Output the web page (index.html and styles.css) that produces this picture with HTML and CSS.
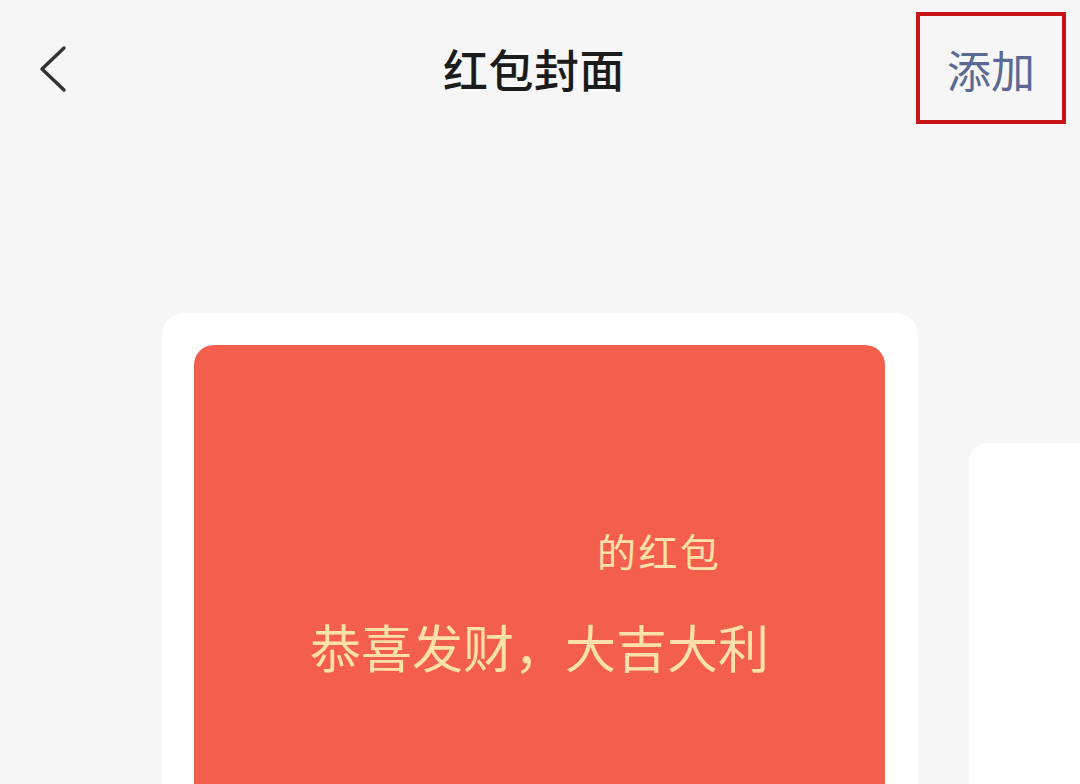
FILE: index.html
```html
<!DOCTYPE html>
<html lang="zh">
<head>
<meta charset="utf-8">
<link rel="stylesheet" href="styles.css">
</head>
<body>
<div class="page">
  <header class="topbar">
    <div class="back">
      <svg width="30" height="48" viewBox="0 0 30 48"><polyline points="26,3 4,24 26,45" fill="none" stroke="#333" stroke-width="3.4" stroke-linecap="round" stroke-linejoin="round"/></svg>
    </div>
    <h1 class="title">红包封面</h1>
    <div class="add">添加</div>
  </header>
  <main class="carousel">
    <div class="card">
      <div class="envelope">
        <div class="from">的红包</div>
        <div class="wish">恭喜发财，大吉大利</div>
      </div>
    </div>
    <div class="card card-next"></div>
  </main>
</div>
</body>
</html>
```
FILE: styles.css
```css
html, body {
  margin: 0;
  padding: 0;
  background: #f6f6f6;
  font-family: "Noto Sans CJK SC", "Noto Sans", sans-serif;
}
.page {
  width: 1080px;
  height: 784px;
  overflow: hidden;
}
.topbar {
  display: grid;
  grid-template-columns: 1fr auto 1fr;
  align-items: center;
  padding-top: 12px;
  height: 112px;
}
.back {
  padding-left: 38px;
  display: flex;
  align-items: center;
  height: 48px;
  margin-top: 2px;
}
.title {
  margin: 0 0 0 -12px;
  font-size: 45px;
  font-weight: 500;
  color: #1b1b1b;
  line-height: 1;
  letter-spacing: 0.5px;
}
.add {
  justify-self: end;
  margin-right: 14px;
  box-sizing: border-box;
  width: 150px;
  height: 112px;
  border: 4px solid #c8151a;
  display: flex;
  align-items: center;
  justify-content: center;
  font-size: 44px;
  color: #5a6a92;
  padding-top: 2px;
}
.carousel {
  display: flex;
  align-items: flex-start;
  gap: 51px;
  padding-left: 162px;
  padding-top: 189px;
}
.card {
  flex: none;
  width: 756px;
  height: 520px;
  box-sizing: border-box;
  background: #ffffff;
  border-radius: 22px;
  padding: 32px 33px 0 32px;
}
.card-next {
  width: 300px;
  margin-top: 130px;
  border-radius: 18px;
}
.envelope {
  height: 100%;
  background: #f45f4d;
  border-radius: 20px 20px 0 0;
  padding-top: 186px;
  box-sizing: border-box;
  color: #fde0aa;
}
.from {
  font-size: 39px;
  line-height: 39px;
  letter-spacing: 2.5px;
  padding-left: 403px;
}
.wish {
  margin-top: 51px;
  font-size: 51px;
  line-height: 51px;
  text-align: center;
}
```
